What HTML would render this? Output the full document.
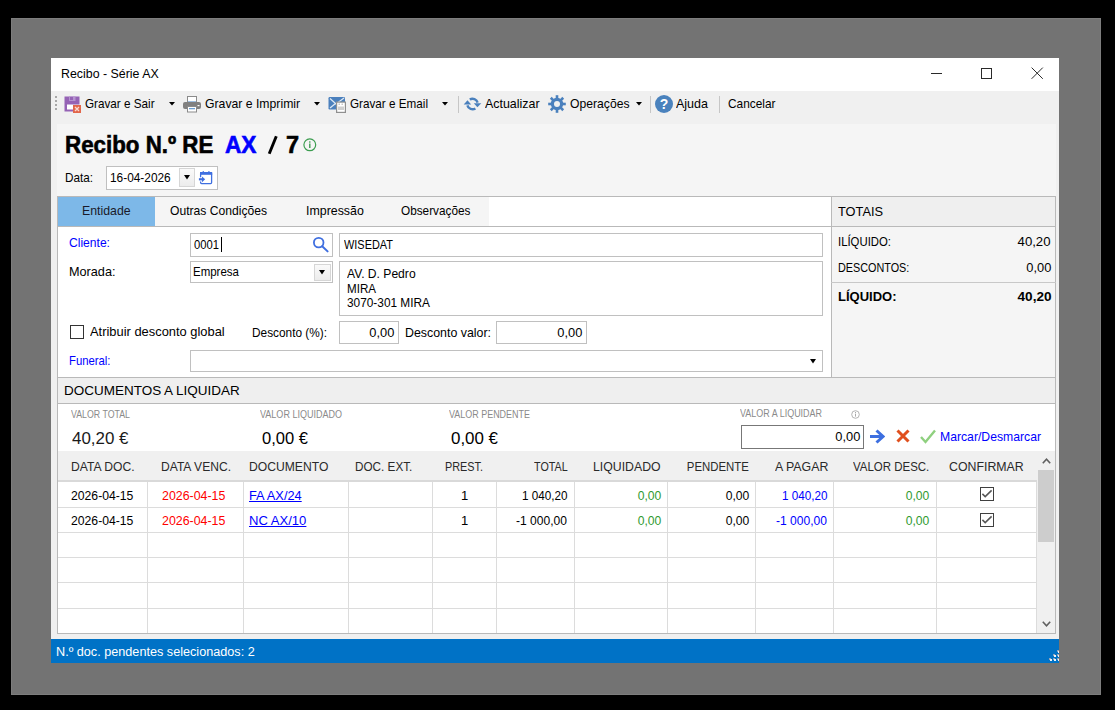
<!DOCTYPE html>
<html><head><meta charset="utf-8"><style>
html,body{margin:0;padding:0;}
body{width:1115px;height:710px;background:#000;position:relative;overflow:hidden;font-family:"Liberation Sans",sans-serif;}
body>div{position:absolute;}
.t{position:absolute;white-space:nowrap;}
</style></head><body>
<div style="left:11px;top:18px;width:1090px;height:677px;background:#737373;box-sizing:border-box;border:1px solid #7d7d7d"></div>
<div style="left:51px;top:58px;width:1008px;height:605px;background:#f0f0f0"></div>
<div style="left:51px;top:58px;width:1008px;height:33px;background:#fff"></div>
<div class="t" style="left:61px;top:67.00px;font-size:13px;line-height:13px;color:#000;font-weight:normal;transform:scaleX(0.9522);transform-origin:left 50%;">Recibo - Série AX</div>
<div style="left:931px;top:73px;width:11px;height:1px;background:#2a2a2a"></div>
<div style="left:981px;top:68px;width:11px;height:11px;box-sizing:border-box;border:1px solid #2a2a2a"></div>
<svg style="position:absolute;left:1031px;top:67px" width="13" height="13" viewBox="0 0 13 13"><path d="M0.6 0.6L11.8 11.8M11.8 0.6L0.6 11.8" stroke="#2a2a2a" stroke-width="1"/></svg>
<div style="left:55px;top:96px;width:2px;height:2px;background:#a8a8a8"></div>
<div style="left:55px;top:100px;width:2px;height:2px;background:#a8a8a8"></div>
<div style="left:55px;top:104px;width:2px;height:2px;background:#a8a8a8"></div>
<div style="left:55px;top:108px;width:2px;height:2px;background:#a8a8a8"></div>
<svg style="position:absolute;left:64px;top:96px" width="18" height="17" viewBox="0 0 18 17"><path d="M0.5 0.5H15.5V8.5H9V15.5H0.5Z" fill="#9563b5"/><rect x="3" y="8.5" width="6" height="5" fill="#fff"/><rect x="5" y="0.5" width="6.5" height="4.5" fill="#b593cf"/><rect x="6" y="1" width="3" height="3" fill="#9563b5"/><rect x="9" y="9" width="8" height="8" fill="#e2664a"/><path d="M11 11L15 15M15 11L11 15" stroke="#fbd9d0" stroke-width="1.3"/></svg>
<div class="t" style="left:85px;top:97.00px;font-size:13px;line-height:13px;color:#000;font-weight:normal;transform:scaleX(0.9004);transform-origin:left 50%;">Gravar e Sair</div>
<svg style="position:absolute;left:169px;top:102px" width="6" height="4" viewBox="0 0 6 4"><path d="M0 0H6L3.0 3.5Z" fill="#000"/></svg>
<svg style="position:absolute;left:183px;top:96px" width="19" height="17" viewBox="0 0 19 17"><rect x="4.5" y="0.5" width="9" height="7" fill="#fff" stroke="#8a8a8a"/><rect x="5" y="5.5" width="8" height="2" fill="#3f7fc1"/><rect x="0" y="6" width="18" height="7" rx="2" fill="#808080"/><rect x="14.5" y="9" width="2" height="1.2" fill="#fff"/><rect x="4.5" y="10.5" width="9" height="5.5" fill="#fff" stroke="#8a8a8a"/><rect x="6" y="12" width="6" height="1.3" fill="#6d9fd4"/></svg>
<div class="t" style="left:205px;top:97.00px;font-size:13px;line-height:13px;color:#000;font-weight:normal;transform:scaleX(0.9407);transform-origin:left 50%;">Gravar e Imprimir</div>
<svg style="position:absolute;left:314px;top:102px" width="6" height="4" viewBox="0 0 6 4"><path d="M0 0H6L3.0 3.5Z" fill="#000"/></svg>
<svg style="position:absolute;left:328px;top:96px" width="19" height="18" viewBox="0 0 19 18"><rect x="0.5" y="1" width="16.5" height="12.5" rx="1.2" fill="#4b80bd"/><path d="M2 2.5L8 8L16 2" stroke="#dfe9f4" stroke-width="1.2" fill="none"/><path d="M2 12L7.5 7.5" stroke="#dfe9f4" stroke-width="1.2"/><rect x="8.6" y="6.1" width="8.8" height="10.3" fill="#fff" stroke="#8f8f8f" stroke-width="1.2"/><rect x="10.5" y="7.5" width="1.5" height="1.5" fill="#c8c8c8"/><rect x="13.5" y="7.5" width="1.5" height="1.5" fill="#c8c8c8"/><rect x="10" y="10.5" width="6" height="3.5" fill="#cfcfcf"/></svg>
<div class="t" style="left:350px;top:97.00px;font-size:13px;line-height:13px;color:#000;font-weight:normal;transform:scaleX(0.8997);transform-origin:left 50%;">Gravar e Email</div>
<svg style="position:absolute;left:442px;top:102px" width="6" height="4" viewBox="0 0 6 4"><path d="M0 0H6L3.0 3.5Z" fill="#000"/></svg>
<div style="left:458px;top:96px;width:1px;height:17px;background:#c6c6c6"></div>
<svg style="position:absolute;left:463px;top:96px" width="20" height="16" viewBox="0 0 20 16"><path d="M6.77 3.46A5.3 5.3 0 0 1 14.62 6.63" stroke="#4a80bd" stroke-width="2.4" fill="none"/><path d="M12.39 12.44A5.3 5.3 0 0 1 4.38 9.37" stroke="#4a80bd" stroke-width="2.4" fill="none"/><path d="M10.8 7.2H18.3L14.4 11.3Z" fill="#4a80bd"/><path d="M0.7 8.6H8.2L4.5 4.2Z" fill="#4a80bd"/></svg>
<div class="t" style="left:485px;top:97.00px;font-size:13px;line-height:13px;color:#000;font-weight:normal;transform:scaleX(0.9562);transform-origin:left 50%;">Actualizar</div>
<svg style="position:absolute;left:548px;top:95px" width="18" height="18" viewBox="0 0 18 18"><rect x="7.7" y="0.2" width="2.6" height="4" fill="#4a80bd" transform="rotate(0 9 9)"/><rect x="7.7" y="0.2" width="2.6" height="4" fill="#4a80bd" transform="rotate(45 9 9)"/><rect x="7.7" y="0.2" width="2.6" height="4" fill="#4a80bd" transform="rotate(90 9 9)"/><rect x="7.7" y="0.2" width="2.6" height="4" fill="#4a80bd" transform="rotate(135 9 9)"/><rect x="7.7" y="0.2" width="2.6" height="4" fill="#4a80bd" transform="rotate(180 9 9)"/><rect x="7.7" y="0.2" width="2.6" height="4" fill="#4a80bd" transform="rotate(225 9 9)"/><rect x="7.7" y="0.2" width="2.6" height="4" fill="#4a80bd" transform="rotate(270 9 9)"/><rect x="7.7" y="0.2" width="2.6" height="4" fill="#4a80bd" transform="rotate(315 9 9)"/><circle cx="9" cy="9" r="6.2" fill="#4a80bd"/><circle cx="9" cy="9" r="3" fill="#f0f0f0"/></svg>
<div class="t" style="left:570px;top:97.00px;font-size:13px;line-height:13px;color:#000;font-weight:normal;transform:scaleX(0.9355);transform-origin:left 50%;">Operações</div>
<svg style="position:absolute;left:636px;top:102px" width="6" height="4" viewBox="0 0 6 4"><path d="M0 0H6L3.0 3.5Z" fill="#000"/></svg>
<div style="left:650px;top:96px;width:1px;height:17px;background:#c6c6c6"></div>
<svg style="position:absolute;left:655px;top:95px" width="18" height="18" viewBox="0 0 18 18"><circle cx="9" cy="9" r="9" fill="#4a82bd"/><text x="9" y="14.2" font-family="Liberation Sans" font-weight="bold" font-size="14" fill="#fff" text-anchor="middle">?</text></svg>
<div class="t" style="left:676px;top:97.00px;font-size:13px;line-height:13px;color:#000;font-weight:normal;transform:scaleX(0.9624);transform-origin:left 50%;">Ajuda</div>
<div style="left:719px;top:96px;width:1px;height:17px;background:#c6c6c6"></div>
<div class="t" style="left:728px;top:97.00px;font-size:13px;line-height:13px;color:#000;font-weight:normal;transform:scaleX(0.9115);transform-origin:left 50%;">Cancelar</div>
<div style="left:57px;top:124px;width:999px;height:509px;background:#f5f5f5"></div>
<div class="t" style="left:65px;top:134.11px;font-size:23.5px;line-height:23.5px;color:#000;font-weight:bold;transform:scaleX(0.9504);transform-origin:left 50%;-webkit-text-stroke:0.6px currentColor;">Recibo N.º RE</div>
<div class="t" style="left:225px;top:134.11px;font-size:23.5px;line-height:23.5px;color:#0000ff;font-weight:bold;transform:scaleX(0.9648);transform-origin:left 50%;-webkit-text-stroke:0.6px currentColor;">AX</div>
<svg style="position:absolute;left:266px;top:134px" width="14" height="22" viewBox="0 0 14 22"><path d="M10.3 2.2L3.2 19.8" stroke="#000" stroke-width="2.9"/></svg>
<div class="t" style="left:286px;top:134.11px;font-size:23.5px;line-height:23.5px;color:#000;font-weight:bold;-webkit-text-stroke:0.6px currentColor;">7</div>
<svg style="position:absolute;left:303px;top:138px" width="14" height="14" viewBox="0 0 14 14"><circle cx="6.8" cy="6.8" r="5.9" fill="none" stroke="#3c9d50" stroke-width="1.2"/><rect x="6.1" y="5.5" width="1.4" height="4.5" fill="#3c9d50"/><rect x="6.1" y="3.3" width="1.4" height="1.4" fill="#3c9d50"/></svg>
<div class="t" style="left:65px;top:171.00px;font-size:13px;line-height:13px;color:#000;font-weight:normal;transform:scaleX(0.9018);transform-origin:left 50%;">Data:</div>
<div style="left:106px;top:166px;width:112px;height:24px;box-sizing:border-box;border:1px solid #c0c0c0;background:#fff"></div>
<div class="t" style="left:110px;top:171.00px;font-size:13px;line-height:13px;color:#000;font-weight:normal;transform:scaleX(0.9128);transform-origin:left 50%;">16-04-2026</div>
<div style="left:179px;top:168px;width:16px;height:19px;box-sizing:border-box;border:1px solid #d6d6d6;background:linear-gradient(#fafafa,#ececec)"></div>
<svg style="position:absolute;left:184px;top:175px" width="6" height="5" viewBox="0 0 6 5"><path d="M0 0H6L3.0 4.5Z" fill="#000"/></svg>
<svg style="position:absolute;left:198px;top:170px" width="16" height="16" viewBox="0 0 16 16"><path d="M2.6 7.2V3.6Q2.6 2.6 3.6 2.6H12.6Q13.6 2.6 13.6 3.6V12.6Q13.6 13.6 12.6 13.6H3.6Q2.6 13.6 2.6 12.6V11.4" fill="none" stroke="#3f6fe0" stroke-width="1.3"/><rect x="2" y="2" width="12.2" height="2.8" fill="#3f6fe0"/><rect x="4.6" y="1.2" width="1.4" height="1.5" fill="#3f6fe0"/><rect x="10.2" y="1.2" width="1.4" height="1.5" fill="#3f6fe0"/><path d="M0.9 9.3H4.5" stroke="#3f6fe0" stroke-width="2.2"/><path d="M4 6.4L7.2 9.3L4 12.2Z" fill="#3f6fe0"/></svg>
<div style="left:57px;top:196px;width:775px;height:182px;box-sizing:border-box;border:1px solid #b9b9b9;background:#fff"></div>
<div style="left:58px;top:197px;width:431px;height:29px;background:#f5f5f5"></div>
<div style="left:58px;top:197px;width:97px;height:29px;background:#7db8e8"></div>
<div style="left:57px;top:226px;width:774px;height:1px;background:#b9b9b9"></div>
<div class="t" style="left:82px;top:204.00px;font-size:13px;line-height:13px;color:#1a1a2a;font-weight:normal;transform:scaleX(0.9474);transform-origin:left 50%;">Entidade</div>
<div class="t" style="left:170px;top:204.00px;font-size:13px;line-height:13px;color:#000;font-weight:normal;transform:scaleX(0.9322);transform-origin:left 50%;">Outras Condições</div>
<div class="t" style="left:306px;top:204.00px;font-size:13px;line-height:13px;color:#000;font-weight:normal;transform:scaleX(0.9522);transform-origin:left 50%;">Impressão</div>
<div class="t" style="left:401px;top:204.00px;font-size:13px;line-height:13px;color:#000;font-weight:normal;transform:scaleX(0.9060);transform-origin:left 50%;">Observações</div>
<div style="left:831px;top:196px;width:225px;height:182px;box-sizing:border-box;border:1px solid #b9b9b9;background:#f5f5f5"></div>
<div style="left:832px;top:197px;width:223px;height:29px;background:#efefef"></div>
<div style="left:831px;top:226px;width:225px;height:1px;background:#b9b9b9"></div>
<div class="t" style="left:838px;top:205.00px;font-size:13px;line-height:13px;color:#000;font-weight:normal;transform:scaleX(0.9836);transform-origin:left 50%;">TOTAIS</div>
<div class="t" style="left:838px;top:235.00px;font-size:13px;line-height:13px;color:#000;font-weight:normal;transform:scaleX(0.8731);transform-origin:left 50%;">ILÍQUIDO:</div>
<div class="t" style="right:64px;top:235.00px;font-size:13px;line-height:13px;color:#000;font-weight:normal;transform:scaleX(1.0138);transform-origin:right 50%;">40,20</div>
<div class="t" style="left:838px;top:261.00px;font-size:13px;line-height:13px;color:#000;font-weight:normal;transform:scaleX(0.8320);transform-origin:left 50%;">DESCONTOS:</div>
<div class="t" style="right:64px;top:261.00px;font-size:13px;line-height:13px;color:#000;font-weight:normal;transform:scaleX(0.9881);transform-origin:right 50%;">0,00</div>
<div style="left:831px;top:282px;width:225px;height:1px;background:#c8c8c8"></div>
<div class="t" style="left:838px;top:290.00px;font-size:13px;line-height:13px;color:#000;font-weight:bold;transform:scaleX(1.0000);transform-origin:left 50%;">LÍQUIDO:</div>
<div class="t" style="right:63px;top:290.00px;font-size:13px;line-height:13px;color:#000;font-weight:bold;transform:scaleX(1.0445);transform-origin:right 50%;">40,20</div>
<div class="t" style="left:69px;top:236.00px;font-size:13px;line-height:13px;color:#0000ff;font-weight:normal;transform:scaleX(0.9297);transform-origin:left 50%;">Cliente:</div>
<div style="left:190px;top:233px;width:143px;height:24px;box-sizing:border-box;border:1px solid #c0c0c0;background:#fff"></div>
<div class="t" style="left:194px;top:238.00px;font-size:13px;line-height:13px;color:#000;font-weight:normal;transform:scaleX(0.8651);transform-origin:left 50%;">0001</div>
<div style="left:221px;top:237px;width:1px;height:15px;background:#000"></div>
<svg style="position:absolute;left:312px;top:236px" width="18" height="18" viewBox="0 0 18 18"><circle cx="6.7" cy="6.6" r="4.8" fill="none" stroke="#3f6fe0" stroke-width="1.8"/><path d="M10.2 10.2L15.6 15.4" stroke="#3f6fe0" stroke-width="2" stroke-linecap="round"/></svg>
<div style="left:339px;top:233px;width:484px;height:24px;box-sizing:border-box;border:1px solid #c0c0c0;background:#fff"></div>
<div class="t" style="left:344px;top:238.00px;font-size:13px;line-height:13px;color:#000;font-weight:normal;transform:scaleX(0.8412);transform-origin:left 50%;">WISEDAT</div>
<div class="t" style="left:69px;top:265.00px;font-size:13px;line-height:13px;color:#000;font-weight:normal;transform:scaleX(0.9748);transform-origin:left 50%;">Morada:</div>
<div style="left:190px;top:261px;width:143px;height:22px;box-sizing:border-box;border:1px solid #c0c0c0;background:#fff"></div>
<div class="t" style="left:193px;top:265.00px;font-size:13px;line-height:13px;color:#000;font-weight:normal;transform:scaleX(0.8838);transform-origin:left 50%;">Empresa</div>
<div style="left:314px;top:264px;width:17px;height:17px;box-sizing:border-box;border:1px solid #d6d6d6;background:linear-gradient(#fafafa,#ececec)"></div>
<svg style="position:absolute;left:319px;top:270px" width="6" height="5" viewBox="0 0 6 5"><path d="M0 0H6L3.0 4.5Z" fill="#000"/></svg>
<div style="left:339px;top:261px;width:484px;height:55px;box-sizing:border-box;border:1px solid #c0c0c0;background:#fff"></div>
<div class="t" style="left:347px;top:267.00px;font-size:13px;line-height:13px;color:#000;font-weight:normal;transform:scaleX(0.9308);transform-origin:left 50%;">AV. D. Pedro</div>
<div class="t" style="left:347px;top:281.50px;font-size:13px;line-height:13px;color:#000;font-weight:normal;transform:scaleX(0.8923);transform-origin:left 50%;">MIRA</div>
<div class="t" style="left:347px;top:296.00px;font-size:13px;line-height:13px;color:#000;font-weight:normal;transform:scaleX(0.9116);transform-origin:left 50%;">3070-301 MIRA</div>
<div style="left:70px;top:325px;width:14px;height:14px;box-sizing:border-box;border:1px solid #333;background:#fff"></div>
<div class="t" style="left:90px;top:325.00px;font-size:13px;line-height:13px;color:#000;font-weight:normal;transform:scaleX(0.9915);transform-origin:left 50%;">Atribuir desconto global</div>
<div class="t" style="left:252px;top:326.00px;font-size:13px;line-height:13px;color:#000;font-weight:normal;transform:scaleX(0.9107);transform-origin:left 50%;">Desconto (%):</div>
<div style="left:339px;top:321px;width:60px;height:23px;box-sizing:border-box;border:1px solid #c0c0c0;background:#fff"></div>
<div class="t" style="right:721px;top:326.00px;font-size:13px;line-height:13px;color:#000;font-weight:normal;transform:scaleX(0.9881);transform-origin:right 50%;">0,00</div>
<div class="t" style="left:405px;top:326.00px;font-size:13px;line-height:13px;color:#000;font-weight:normal;transform:scaleX(0.9524);transform-origin:left 50%;">Desconto valor:</div>
<div style="left:496px;top:321px;width:91px;height:23px;box-sizing:border-box;border:1px solid #c0c0c0;background:#fff"></div>
<div class="t" style="right:533px;top:326.00px;font-size:13px;line-height:13px;color:#000;font-weight:normal;transform:scaleX(0.9881);transform-origin:right 50%;">0,00</div>
<div class="t" style="left:69px;top:354.00px;font-size:13px;line-height:13px;color:#0000ff;font-weight:normal;transform:scaleX(0.8700);transform-origin:left 50%;">Funeral:</div>
<div style="left:190px;top:350px;width:633px;height:22px;box-sizing:border-box;border:1px solid #c0c0c0;background:#fff"></div>
<svg style="position:absolute;left:810px;top:359px" width="6" height="5" viewBox="0 0 6 5"><path d="M0 0H6L3.0 4.5Z" fill="#000"/></svg>
<div style="left:57px;top:377px;width:999px;height:27px;box-sizing:border-box;border:1px solid #b9b9b9;background:#efefef"></div>
<div class="t" style="left:64px;top:383.57px;font-size:13.5px;line-height:13.5px;color:#000;font-weight:normal;transform:scaleX(0.9986);transform-origin:left 50%;">DOCUMENTOS A LIQUIDAR</div>
<div style="left:57px;top:403px;width:999px;height:231px;box-sizing:border-box;border:1px solid #b9b9b9;background:#fff"></div>
<div class="t" style="left:71px;top:410.04px;font-size:10px;line-height:10px;color:#8a8a8a;font-weight:normal;transform:scaleX(0.8799);transform-origin:left 50%;">VALOR TOTAL</div>
<div class="t" style="left:72px;top:429.61px;font-size:17px;line-height:17px;color:#1a1a1a;font-weight:normal;transform:scaleX(0.9965);transform-origin:left 50%;">40,20 €</div>
<div class="t" style="left:260px;top:410.04px;font-size:10px;line-height:10px;color:#8a8a8a;font-weight:normal;transform:scaleX(0.9016);transform-origin:left 50%;">VALOR LIQUIDADO</div>
<div class="t" style="left:262px;top:429.61px;font-size:17px;line-height:17px;color:#000;font-weight:normal;transform:scaleX(0.9735);transform-origin:left 50%;">0,00 €</div>
<div class="t" style="left:449px;top:410.04px;font-size:10px;line-height:10px;color:#8a8a8a;font-weight:normal;transform:scaleX(0.8960);transform-origin:left 50%;">VALOR PENDENTE</div>
<div class="t" style="left:451px;top:429.61px;font-size:17px;line-height:17px;color:#000;font-weight:normal;transform:scaleX(0.9947);transform-origin:left 50%;">0,00 €</div>
<div class="t" style="left:740px;top:408.54px;font-size:10px;line-height:10px;color:#8a8a8a;font-weight:normal;transform:scaleX(0.8962);transform-origin:left 50%;">VALOR A LIQUIDAR</div>
<svg style="position:absolute;left:851px;top:410px" width="9" height="9" viewBox="0 0 9 9"><circle cx="4.5" cy="4.5" r="3.8" fill="none" stroke="#aaa" stroke-width="0.9"/><rect x="4" y="3.6" width="1" height="3" fill="#aaa"/><rect x="4" y="2" width="1" height="1" fill="#aaa"/></svg>
<div style="left:741px;top:425px;width:123px;height:24px;box-sizing:border-box;border:1px solid #777;background:#fff"></div>
<div class="t" style="right:255px;top:429.50px;font-size:13px;line-height:13px;color:#000;font-weight:normal;transform:scaleX(0.9881);transform-origin:right 50%;">0,00</div>
<svg style="position:absolute;left:869px;top:429px" width="16" height="15" viewBox="0 0 16 15"><path d="M1 7.5H12" stroke="#3d6fe0" stroke-width="3"/><path d="M7.5 1.5L14 7.5L7.5 13.5" stroke="#3d6fe0" stroke-width="3" fill="none"/></svg>
<svg style="position:absolute;left:896px;top:429px" width="14" height="14" viewBox="0 0 14 14"><path d="M1.5 1.5L12.5 12.5M12.5 1.5L1.5 12.5" stroke="#e0501e" stroke-width="3"/></svg>
<svg style="position:absolute;left:920px;top:429px" width="16" height="15" viewBox="0 0 16 15"><path d="M1 8L5.5 13L15 1.5" stroke="#8fd07f" stroke-width="2.4" fill="none"/></svg>
<div class="t" style="left:940px;top:429.50px;font-size:13px;line-height:13px;color:#0000ff;font-weight:normal;transform:scaleX(0.9387);transform-origin:left 50%;">Marcar/Desmarcar</div>
<div style="left:58px;top:451px;width:979px;height:30px;background:#f0f0f0"></div>
<div style="left:58px;top:480px;width:979px;height:2px;background:#d9d9d9"></div>
<div style="left:58px;top:507px;width:979px;height:1px;background:#dcdcdc"></div>
<div style="left:58px;top:532px;width:979px;height:1px;background:#dcdcdc"></div>
<div style="left:58px;top:557px;width:979px;height:1px;background:#dcdcdc"></div>
<div style="left:58px;top:582px;width:979px;height:1px;background:#dcdcdc"></div>
<div style="left:58px;top:608px;width:979px;height:1px;background:#dcdcdc"></div>
<div style="left:147px;top:482px;width:1px;height:151px;background:#dcdcdc"></div>
<div style="left:243px;top:482px;width:1px;height:151px;background:#dcdcdc"></div>
<div style="left:348px;top:482px;width:1px;height:151px;background:#dcdcdc"></div>
<div style="left:432px;top:482px;width:1px;height:151px;background:#dcdcdc"></div>
<div style="left:496px;top:482px;width:1px;height:151px;background:#dcdcdc"></div>
<div style="left:574px;top:482px;width:1px;height:151px;background:#dcdcdc"></div>
<div style="left:667px;top:482px;width:1px;height:151px;background:#dcdcdc"></div>
<div style="left:755px;top:482px;width:1px;height:151px;background:#dcdcdc"></div>
<div style="left:833px;top:482px;width:1px;height:151px;background:#dcdcdc"></div>
<div style="left:936px;top:482px;width:1px;height:151px;background:#dcdcdc"></div>
<div style="left:1036px;top:482px;width:1px;height:151px;background:#dcdcdc"></div>
<div class="t" style="left:71px;top:460.00px;font-size:13px;line-height:13px;color:#2a2a2a;font-weight:normal;transform:scaleX(0.9332);transform-origin:left 50%;">DATA DOC.</div>
<div class="t" style="left:160.5px;top:460.00px;font-size:13px;line-height:13px;color:#2a2a2a;font-weight:normal;transform:scaleX(0.9290);transform-origin:left 50%;">DATA VENC.</div>
<div class="t" style="left:249.3px;top:460.00px;font-size:13px;line-height:13px;color:#2a2a2a;font-weight:normal;transform:scaleX(0.9341);transform-origin:left 50%;">DOCUMENTO</div>
<div class="t" style="left:355px;top:460.00px;font-size:13px;line-height:13px;color:#2a2a2a;font-weight:normal;transform:scaleX(0.9017);transform-origin:left 50%;">DOC. EXT.</div>
<div class="t" style="left:445px;top:460.00px;font-size:13px;line-height:13px;color:#2a2a2a;font-weight:normal;transform:scaleX(0.8352);transform-origin:left 50%;">PREST.</div>
<div class="t" style="right:547.6px;top:460.00px;font-size:13px;line-height:13px;color:#2a2a2a;font-weight:normal;transform:scaleX(0.8256);transform-origin:right 50%;">TOTAL</div>
<div class="t" style="left:593.4px;top:460.00px;font-size:13px;line-height:13px;color:#2a2a2a;font-weight:normal;transform:scaleX(0.9455);transform-origin:left 50%;">LIQUIDADO</div>
<div class="t" style="right:365.79999999999995px;top:460.00px;font-size:13px;line-height:13px;color:#2a2a2a;font-weight:normal;transform:scaleX(0.8757);transform-origin:right 50%;">PENDENTE</div>
<div class="t" style="left:775px;top:460.00px;font-size:13px;line-height:13px;color:#2a2a2a;font-weight:normal;transform:scaleX(0.9501);transform-origin:left 50%;">A PAGAR</div>
<div class="t" style="left:853.4px;top:460.00px;font-size:13px;line-height:13px;color:#2a2a2a;font-weight:normal;transform:scaleX(0.8826);transform-origin:left 50%;">VALOR DESC.</div>
<div class="t" style="left:949.1px;top:460.00px;font-size:13px;line-height:13px;color:#2a2a2a;font-weight:normal;transform:scaleX(0.9492);transform-origin:left 50%;">CONFIRMAR</div>
<div class="t" style="left:71px;top:489.00px;font-size:13px;line-height:13px;color:#000;font-weight:normal;transform:scaleX(0.9383);transform-origin:left 50%;">2026-04-15</div>
<div class="t" style="left:162.4px;top:489.00px;font-size:13px;line-height:13px;color:#ff0000;font-weight:normal;transform:scaleX(0.9534);transform-origin:left 50%;">2026-04-15</div>
<div class="t" style="left:249.3px;top:489.00px;font-size:13px;line-height:13px;color:#0000ff;font-weight:normal;transform:scaleX(0.9850);transform-origin:left 50%;text-decoration:underline;">FA AX/24</div>
<div class="t" style="left:461px;top:489.00px;font-size:13px;line-height:13px;color:#000;font-weight:normal;">1</div>
<div class="t" style="right:547.6px;top:489.00px;font-size:13px;line-height:13px;color:#000;font-weight:normal;transform:scaleX(0.8992);transform-origin:right 50%;">1 040,20</div>
<div class="t" style="right:454px;top:489.00px;font-size:13px;line-height:13px;color:#2f9a2f;font-weight:normal;transform:scaleX(0.9328);transform-origin:right 50%;">0,00</div>
<div class="t" style="right:365.79999999999995px;top:489.00px;font-size:13px;line-height:13px;color:#000;font-weight:normal;transform:scaleX(0.9328);transform-origin:right 50%;">0,00</div>
<div class="t" style="right:287.70000000000005px;top:489.00px;font-size:13px;line-height:13px;color:#0000ff;font-weight:normal;transform:scaleX(0.8992);transform-origin:right 50%;">1 040,20</div>
<div class="t" style="right:185.60000000000002px;top:489.00px;font-size:13px;line-height:13px;color:#2f9a2f;font-weight:normal;transform:scaleX(0.9328);transform-origin:right 50%;">0,00</div>
<div style="left:980px;top:487px;width:14px;height:14px;box-sizing:border-box;border:1px solid #404040;background:#fff"></div>
<svg style="position:absolute;left:980px;top:487px" width="14" height="14" viewBox="0 0 14 14"><path d="M2.4 6.9L5.2 9.6L11.6 3.4" stroke="#555" stroke-width="1.5" fill="none"/></svg>
<div class="t" style="left:71px;top:514.00px;font-size:13px;line-height:13px;color:#000;font-weight:normal;transform:scaleX(0.9383);transform-origin:left 50%;">2026-04-15</div>
<div class="t" style="left:162.4px;top:514.00px;font-size:13px;line-height:13px;color:#ff0000;font-weight:normal;transform:scaleX(0.9534);transform-origin:left 50%;">2026-04-15</div>
<div class="t" style="left:249.3px;top:514.00px;font-size:13px;line-height:13px;color:#0000ff;font-weight:normal;transform:scaleX(1.0053);transform-origin:left 50%;text-decoration:underline;">NC AX/10</div>
<div class="t" style="left:461px;top:514.00px;font-size:13px;line-height:13px;color:#000;font-weight:normal;">1</div>
<div class="t" style="right:547.6px;top:514.00px;font-size:13px;line-height:13px;color:#000;font-weight:normal;transform:scaleX(0.9281);transform-origin:right 50%;">-1 000,00</div>
<div class="t" style="right:454px;top:514.00px;font-size:13px;line-height:13px;color:#2f9a2f;font-weight:normal;transform:scaleX(0.9328);transform-origin:right 50%;">0,00</div>
<div class="t" style="right:365.79999999999995px;top:514.00px;font-size:13px;line-height:13px;color:#000;font-weight:normal;transform:scaleX(0.9328);transform-origin:right 50%;">0,00</div>
<div class="t" style="right:287.70000000000005px;top:514.00px;font-size:13px;line-height:13px;color:#0000ff;font-weight:normal;transform:scaleX(0.9281);transform-origin:right 50%;">-1 000,00</div>
<div class="t" style="right:185.60000000000002px;top:514.00px;font-size:13px;line-height:13px;color:#2f9a2f;font-weight:normal;transform:scaleX(0.9328);transform-origin:right 50%;">0,00</div>
<div style="left:980px;top:513px;width:14px;height:14px;box-sizing:border-box;border:1px solid #404040;background:#fff"></div>
<svg style="position:absolute;left:980px;top:513px" width="14" height="14" viewBox="0 0 14 14"><path d="M2.4 6.9L5.2 9.6L11.6 3.4" stroke="#555" stroke-width="1.5" fill="none"/></svg>
<div style="left:1037px;top:451px;width:18px;height:182px;background:#f0f0f0"></div>
<div style="left:1038px;top:470px;width:16px;height:72px;background:#cdcdcd"></div>
<svg style="position:absolute;left:1042px;top:458px" width="9" height="6" viewBox="0 0 9 6"><path d="M0.8 5.2L4.5 1.2L8.2 5.2" stroke="#606060" stroke-width="1.6" fill="none"/></svg>
<svg style="position:absolute;left:1042px;top:621px" width="9" height="6" viewBox="0 0 9 6"><path d="M0.8 0.8L4.5 4.8L8.2 0.8" stroke="#606060" stroke-width="1.6" fill="none"/></svg>
<div style="left:51px;top:639px;width:1008px;height:24px;background:#0072c6"></div>
<div class="t" style="left:56px;top:646.42px;font-size:12.5px;line-height:12.5px;color:#fff;font-weight:normal;transform:scaleX(1.0120);transform-origin:left 50%;">N.º doc. pendentes selecionados: 2</div>
<div style="left:1057px;top:650px;width:2px;height:2px;background:#8fa3b8"></div>
<div style="left:1058px;top:651px;width:2px;height:2px;background:#eef4fa"></div>
<div style="left:1053px;top:654px;width:2px;height:2px;background:#8fa3b8"></div>
<div style="left:1054px;top:655px;width:2px;height:2px;background:#eef4fa"></div>
<div style="left:1057px;top:654px;width:2px;height:2px;background:#8fa3b8"></div>
<div style="left:1058px;top:655px;width:2px;height:2px;background:#eef4fa"></div>
<div style="left:1049px;top:658px;width:2px;height:2px;background:#8fa3b8"></div>
<div style="left:1050px;top:659px;width:2px;height:2px;background:#eef4fa"></div>
<div style="left:1053px;top:658px;width:2px;height:2px;background:#8fa3b8"></div>
<div style="left:1054px;top:659px;width:2px;height:2px;background:#eef4fa"></div>
<div style="left:1057px;top:658px;width:2px;height:2px;background:#8fa3b8"></div>
<div style="left:1058px;top:659px;width:2px;height:2px;background:#eef4fa"></div>
<div style="left:1059px;top:639px;width:1px;height:24px;background:#737373"></div>
</body></html>
